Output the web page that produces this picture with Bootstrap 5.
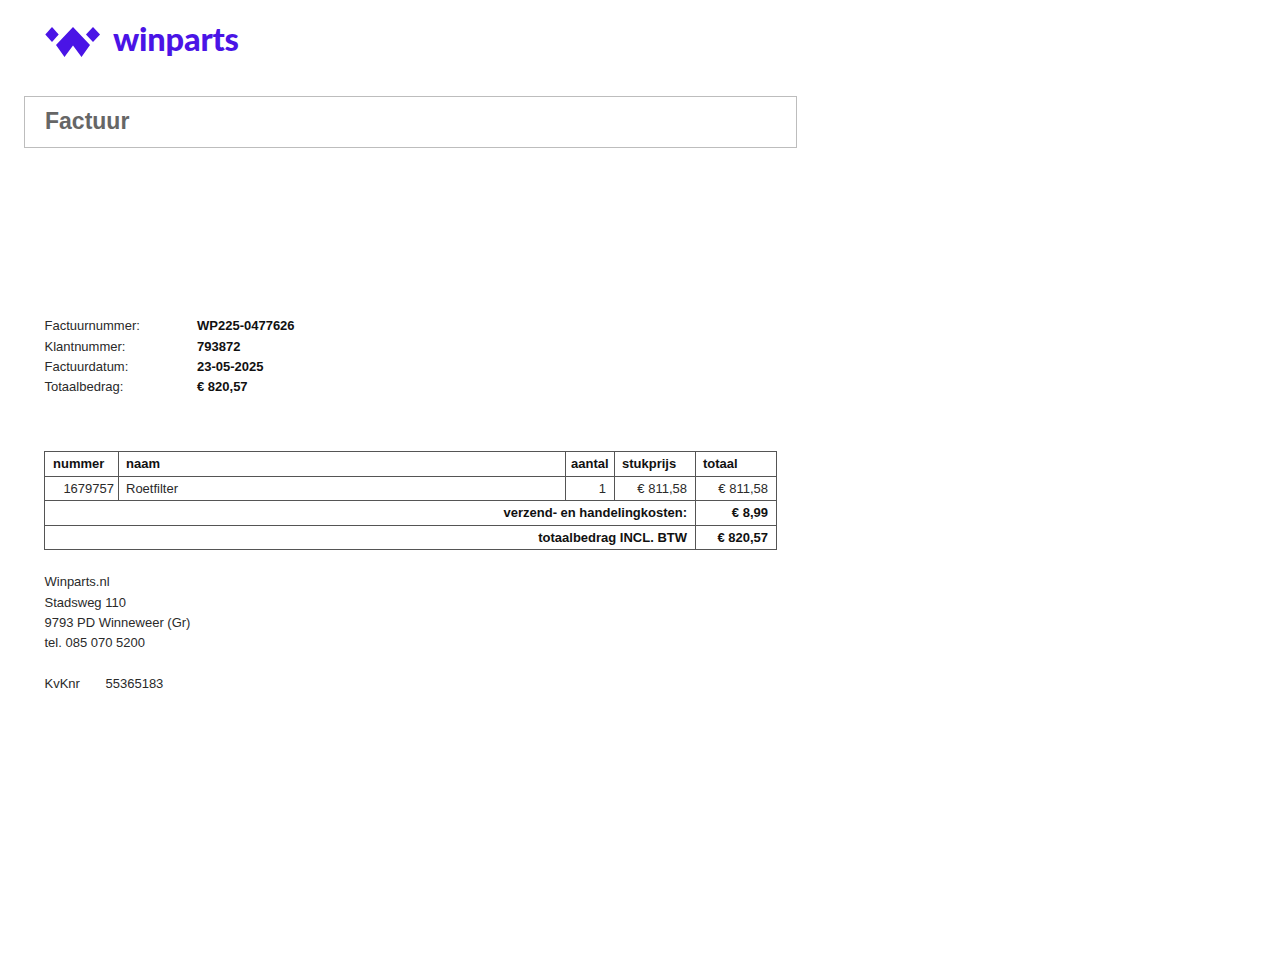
<!DOCTYPE html>
<html lang="nl">
<head>
<meta charset="utf-8">
<title>Factuur</title>
<link href="https://cdn.jsdelivr.net/npm/bootstrap@5.3.0/dist/css/bootstrap.min.css" rel="stylesheet">
<style>
body{font-family:"Liberation Sans",Arial,sans-serif;font-size:13px;line-height:20.3px;color:#2a2a2a;background:#fff;}
.sheet{width:797px;padding:0 0 0 24px;}
.brand{height:96px;padding:24px 0 0 21px;gap:12px;}
.brand svg{width:56px;height:34px;flex:none;}
.brand-name{font-family:"Lato",sans-serif;font-weight:900;font-size:32.5px;line-height:30px;color:#4a14e6;letter-spacing:-.2px;}
.title-box{height:52px;border:1px solid #bdbdbd;padding-left:20px;}
.title-box h1{font-size:23px;line-height:49px;font-weight:700;color:#666;margin:0;}
.facts{margin:168.4px 0 0 20.5px;}
.fact-label{width:152.5px;}
.fact-value{font-weight:700;color:#111;}
.inv{width:732px;table-layout:fixed;border-collapse:collapse;margin:53.800px 0 0 20px;color:#2a2a2a;}
.inv th,.inv td{border:1px solid #555;height:24.5px;padding:0 8px 0 7px;line-height:22px;vertical-align:middle;}
.inv thead th,.inv .strong{font-weight:700;color:#111;}
.inv .tight{padding:0 5px;}
.inv .first-col{padding-left:8px;}
.inv .num-cell{padding:0 4px 0 0;}
.c1{width:74px}.c2{width:447px}.c3{width:49px}.c4{width:81px}.c5{width:81px}
.addr{margin:22px 0 0 20.5px;}
.addr .gap-line{height:20.3px;}
.kvk{display:inline-block;width:61px;}
</style>
</head>
<body class="m-0">
<div class="sheet">
  <div class="brand d-flex align-items-start">
    <svg viewBox="0 0 56 34" aria-label="logo">
      <path fill="#4a14e6" d="M7 3 13.700 10.500 7 18 .3 10.500Z"/>
      <path fill="#4a14e6" d="M48 3 55 10.500 48 18 41 10.500Z"/>
      <path fill="#4a14e6" d="M28 3 45 21 36.500 33 28 21.500 19.500 33 11 21Z"/>
    </svg>
    <div class="brand-name">winparts</div>
  </div>
  <div class="title-box"><h1>Factuur</h1></div>
  <div class="facts">
    <div class="d-flex"><div class="fact-label">Factuurnummer:</div><div class="fact-value">WP225-0477626</div></div>
    <div class="d-flex"><div class="fact-label">Klantnummer:</div><div class="fact-value">793872</div></div>
    <div class="d-flex"><div class="fact-label">Factuurdatum:</div><div class="fact-value">23-05-2025</div></div>
    <div class="d-flex"><div class="fact-label">Totaalbedrag:</div><div class="fact-value">€ 820,57</div></div>
  </div>
  <table class="inv">
    <colgroup><col class="c1"><col class="c2"><col class="c3"><col class="c4"><col class="c5"></colgroup>
    <thead>
      <tr><th class="first-col">nummer</th><th>naam</th><th class="tight">aantal</th><th>stukprijs</th><th>totaal</th></tr>
    </thead>
    <tbody>
      <tr><td class="text-end num-cell">1679757</td><td>Roetfilter</td><td class="text-end">1</td><td class="text-end">€ 811,58</td><td class="text-end">€ 811,58</td></tr>
      <tr><td colspan="4" class="text-end strong">verzend- en handelingkosten:</td><td class="text-end strong">€ 8,99</td></tr>
      <tr><td colspan="4" class="text-end strong">totaalbedrag INCL. BTW</td><td class="text-end strong">€ 820,57</td></tr>
    </tbody>
  </table>
  <div class="addr">
    <div>Winparts.nl</div>
    <div>Stadsweg 110</div>
    <div>9793 PD Winneweer (Gr)</div>
    <div>tel. 085 070 5200</div>
    <div class="gap-line"></div>
    <div><span class="kvk">KvKnr</span>55365183</div>
  </div>
</div>
<script src="https://cdn.jsdelivr.net/npm/bootstrap@5.3.0/dist/js/bootstrap.bundle.min.js"></script>
</body>
</html>
